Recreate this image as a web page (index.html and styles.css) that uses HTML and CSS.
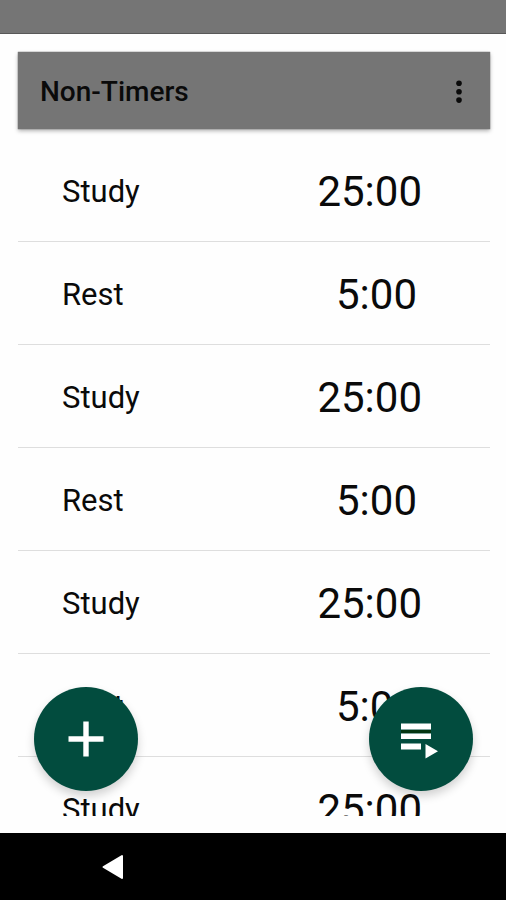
FILE: index.html
```html
<!DOCTYPE html>
<html lang="en">
<head>
<meta charset="utf-8">
<meta name="viewport" content="width=device-width, initial-scale=1">
<title>Non-Timers</title>
<link rel="stylesheet" href="styles.css">
</head>
<body>
<div class="screen">
  <div class="status-bar"></div>
  <main class="app">
    <header class="toolbar">
      <h1 class="toolbar-title">Non-Timers</h1>
      <button class="menu-button" type="button" aria-label="More options">
        <svg width="8" height="24" viewBox="0 0 8 24" fill="currentColor"><circle cx="4" cy="3.300" r="2.800"/><circle cx="4" cy="11.700" r="2.800"/><circle cx="4" cy="20.100" r="2.800"/></svg>
      </button>
    </header>
    <ul class="timers">
      <li class="timer"><span class="name">Study</span><span class="time">25:00</span></li>
      <li class="timer timer-short"><span class="name">Rest</span><span class="time">5:00</span></li>
      <li class="timer"><span class="name">Study</span><span class="time">25:00</span></li>
      <li class="timer timer-short"><span class="name">Rest</span><span class="time">5:00</span></li>
      <li class="timer"><span class="name">Study</span><span class="time">25:00</span></li>
      <li class="timer timer-short"><span class="name">Rest</span><span class="time">5:00</span></li>
      <li class="timer"><span class="name">Study</span><span class="time">25:00</span></li>
    </ul>
    <div class="actions">
      <button class="fab" type="button" aria-label="Add timer">
        <svg width="36" height="36" viewBox="0 0 36 36" fill="currentColor"><path d="M15.300 0.500h5.400V15.300h14.800v5.400H20.700v14.800h-5.400V20.700H0.500v-5.400h14.800z"/></svg>
      </button>
      <button class="fab" type="button" aria-label="Play list">
        <svg width="48" height="48" viewBox="0 0 48 48" fill="currentColor"><path d="M4 8.500h30v6H4zM4 18.500h30v5.500H4zM4 28.500h20v6H4zM28.500 29v14.500L41 36.200z"/><path class="stripe" d="M4 15h30v3H4z"/></svg>
      </button>
    </div>
  </main>
  <nav class="nav-bar">
    <button class="back" type="button" aria-label="Back">
      <svg width="22" height="26" viewBox="0 0 22 26" fill="currentColor" stroke="currentColor" stroke-width="2" stroke-linejoin="round"><path d="M20 2v22L1.500 13z"/></svg>
    </button>
  </nav>
</div>
</body>
</html>
```
FILE: styles.css
```css
* {
  box-sizing: border-box;
}

body {
  margin: 0;
  background: #fefefe;
  color: #0a0a0a;
  font-family: Roboto, "Liberation Sans", sans-serif;
}

button {
  display: flex;
  align-items: center;
  justify-content: center;
  padding: 0;
  border: 0;
  background: none;
  color: inherit;
  cursor: pointer;
}

.screen {
  display: flex;
  flex-direction: column;
  height: 100vh;
}

.status-bar {
  flex: none;
  height: 34px;
  background: #757575;
  border-bottom: 1px solid #585858;
}

.app {
  position: relative;
  display: flex;
  flex: 1;
  flex-direction: column;
  min-height: 0;
  margin: 18px 16px 17px 18px;
}

.toolbar {
  display: flex;
  flex: none;
  align-items: center;
  justify-content: space-between;
  height: 77px;
  padding: 2px 16px 0 22px;
  background: #757575;
  box-shadow: 0 0 1px #444, 0 2px 4px rgba(0, 0, 0, 0.3);
}

.toolbar-title {
  margin: 0;
  font-size: 28px;
  font-weight: 500;
  line-height: 36px;
}

.menu-button {
  width: 30px;
  height: 48px;
}

.timers {
  flex: 1;
  min-height: 0;
  margin: 0;
  padding: 10px 0 0;
  overflow: hidden;
  list-style: none;
}

.timer {
  display: flex;
  align-items: center;
  justify-content: space-between;
  height: 103px;
  padding: 3px 68px 0 44px;
  border-bottom: 1px solid #dedede;
}

.timer-short {
  padding-right: 73px;
}

.name {
  font-size: 31px;
  line-height: 40px;
}

.time {
  font-size: 42px;
  line-height: 48px;
}

.actions {
  position: absolute;
  right: 17px;
  bottom: 25px;
  left: 16px;
  display: flex;
  justify-content: space-between;
}

.fab {
  width: 104px;
  height: 104px;
  border-radius: 50%;
  background: #024c3e;
  color: #fff;
  box-shadow: 0 5px 10px rgba(0, 0, 0, 0.18);
}

.stripe {
  fill: #033512;
}

.nav-bar {
  display: flex;
  flex: none;
  align-items: center;
  height: 67px;
  padding-left: 90px;
  background: #000;
  color: #fff;
}

.back {
  width: 46px;
  height: 46px;
}
```
